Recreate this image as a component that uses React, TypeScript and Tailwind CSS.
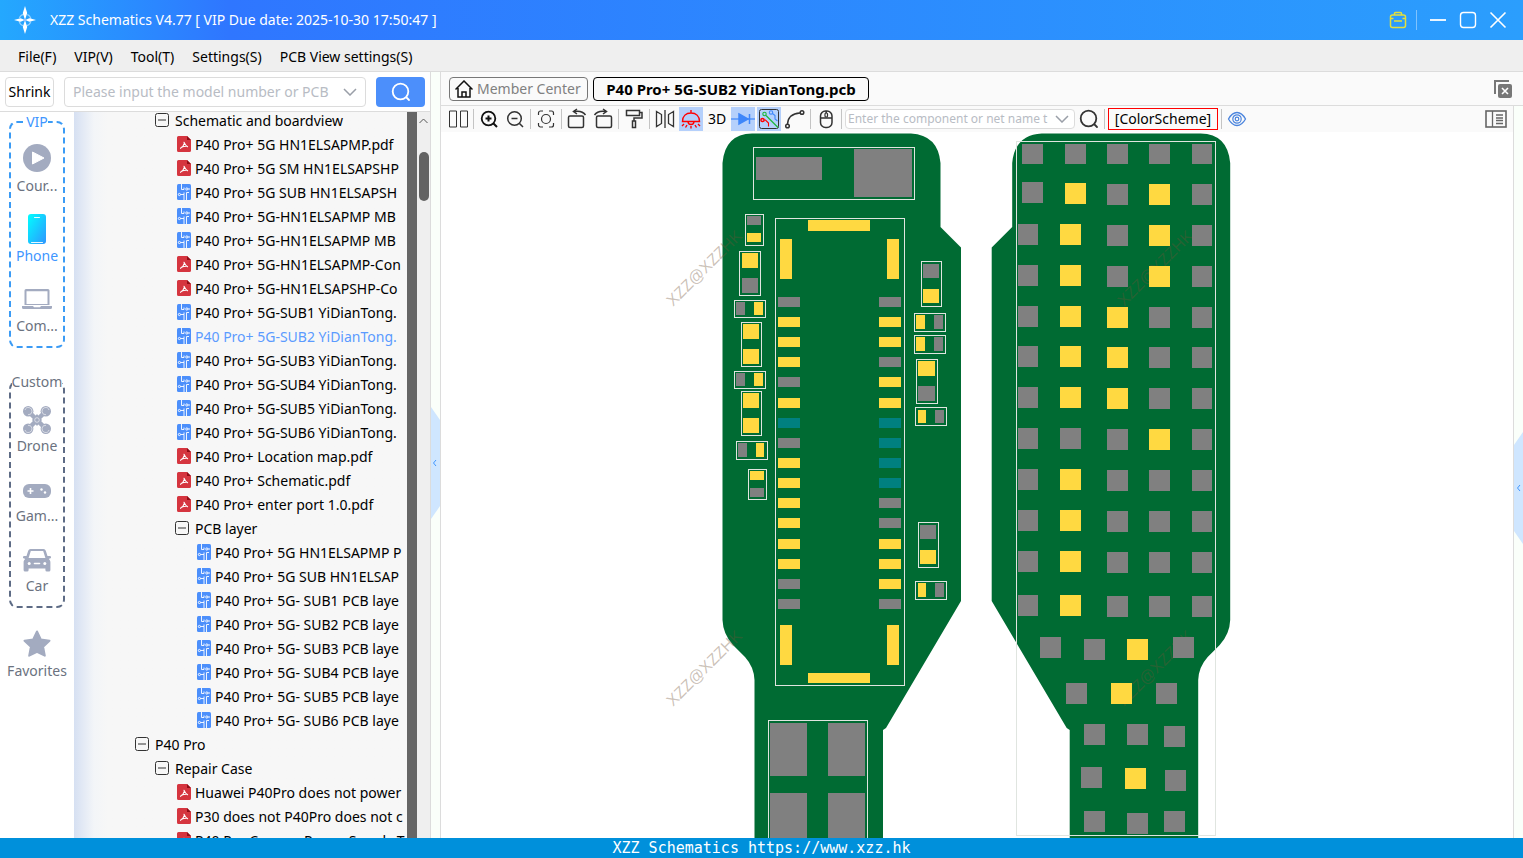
import { FC, ReactNode } from 'react';

type Kind = 'folder' | 'pdf' | 'pcb';

interface TreeRow {
  level: 0 | 1 | 2 | 3;
  kind: Kind;
  name: string;
  active?: boolean;
}

const rows: TreeRow[] = [
  { level: 1, kind: 'folder', name: 'Schematic and boardview' },
  { level: 2, kind: 'pdf', name: 'P40 Pro+ 5G HN1ELSAPMP.pdf' },
  { level: 2, kind: 'pdf', name: 'P40 Pro+ 5G SM HN1ELSAPSHP' },
  { level: 2, kind: 'pcb', name: 'P40 Pro+ 5G SUB HN1ELSAPSH' },
  { level: 2, kind: 'pcb', name: 'P40 Pro+ 5G-HN1ELSAPMP MB' },
  { level: 2, kind: 'pcb', name: 'P40 Pro+ 5G-HN1ELSAPMP MB' },
  { level: 2, kind: 'pdf', name: 'P40 Pro+ 5G-HN1ELSAPMP-Con' },
  { level: 2, kind: 'pdf', name: 'P40 Pro+ 5G-HN1ELSAPSHP-Co' },
  { level: 2, kind: 'pcb', name: 'P40 Pro+ 5G-SUB1 YiDianTong.' },
  { level: 2, kind: 'pcb', name: 'P40 Pro+ 5G-SUB2 YiDianTong.', active: true },
  { level: 2, kind: 'pcb', name: 'P40 Pro+ 5G-SUB3 YiDianTong.' },
  { level: 2, kind: 'pcb', name: 'P40 Pro+ 5G-SUB4 YiDianTong.' },
  { level: 2, kind: 'pcb', name: 'P40 Pro+ 5G-SUB5 YiDianTong.' },
  { level: 2, kind: 'pcb', name: 'P40 Pro+ 5G-SUB6 YiDianTong.' },
  { level: 2, kind: 'pdf', name: 'P40 Pro+ Location map.pdf' },
  { level: 2, kind: 'pdf', name: 'P40 Pro+ Schematic.pdf' },
  { level: 2, kind: 'pdf', name: 'P40 Pro+ enter port 1.0.pdf' },
  { level: 2, kind: 'folder', name: 'PCB layer' },
  { level: 3, kind: 'pcb', name: 'P40 Pro+ 5G HN1ELSAPMP P' },
  { level: 3, kind: 'pcb', name: 'P40 Pro+ 5G SUB HN1ELSAP' },
  { level: 3, kind: 'pcb', name: 'P40 Pro+ 5G- SUB1 PCB laye' },
  { level: 3, kind: 'pcb', name: 'P40 Pro+ 5G- SUB2 PCB laye' },
  { level: 3, kind: 'pcb', name: 'P40 Pro+ 5G- SUB3 PCB laye' },
  { level: 3, kind: 'pcb', name: 'P40 Pro+ 5G- SUB4 PCB laye' },
  { level: 3, kind: 'pcb', name: 'P40 Pro+ 5G- SUB5 PCB laye' },
  { level: 3, kind: 'pcb', name: 'P40 Pro+ 5G- SUB6 PCB laye' },
  { level: 0, kind: 'folder', name: 'P40 Pro' },
  { level: 1, kind: 'folder', name: 'Repair Case' },
  { level: 2, kind: 'pdf', name: 'Huawei P40Pro does not power' },
  { level: 2, kind: 'pdf', name: 'P30 does not P40Pro does not c' },
  { level: 2, kind: 'pdf', name: 'P40 Pro Camera Power Supply T' },
];

const indents = ['pl-[61px]', 'pl-[81px]', 'pl-[101px]', 'pl-[121px]'];

/* ---------- icons ---------- */

const MinusBox = () => (
  <svg width="14" height="14" viewBox="0 0 14 14" fill="none" stroke="#333">
    <rect x=".5" y=".5" width="13" height="13" rx="2" />
    <path d="M3 7h8" />
  </svg>
);

const PdfIcon = () => (
  <svg width="14" height="16" viewBox="0 0 14 16">
    <path d="M1.500 0H10l4 4v10.500a1.500 1.500 0 0 1-1.500 1.500h-11A1.500 1.500 0 0 1 0 14.500v-13A1.500 1.500 0 0 1 1.500 0z" fill="#d5353f" />
    <path d="M10 0l4 4h-4z" fill="#8f0d16" />
    <path d="M7 6.200c.9 2.200 1.600 3.400 3.600 4.500M7.300 7.300c-.5 2-1.600 3.600-3.800 5M4.500 11.300c1.600-.9 3.500-1.200 5.500-1.100" fill="none" stroke="#fff" strokeWidth="1.100" strokeLinecap="round" />
  </svg>
);

const PcbIcon = () => (
  <svg width="14" height="16" viewBox="0 0 14 16">
    <rect width="14" height="16" rx="1.500" fill="#4c8ffb" />
    <g fill="none" stroke="#fff" strokeWidth=".9">
      <path d="M4.500 0v5.500h2.500v-2M3.500 10.500H7V16M7 10.500V8.500M9.500 16V8.500H12M11 5h2" />
      <circle cx="9.800" cy="5" r="1.100" />
      <circle cx="2.400" cy="10.500" r="1.100" />
    </g>
  </svg>
);

const LogoIcon = () => (
  <svg width="24" height="30" viewBox="0 0 24 30" fill="#fff">
    <circle cx="12" cy="15" r="6" fill="none" stroke="#fff" strokeOpacity=".5" strokeWidth="1.200" strokeDasharray="6 3.400" strokeDashoffset="-1.700" />
    <path d="M12 1l2.200 7-2.200 7-2.200-7zM12 29l2.200-7-2.200-7-2.200 7zM1 15l6.500-1.700L12 15l-4.500 1.700zM23 15l-6.500-1.700L12 15l4.500 1.700z" />
    <circle cx="12" cy="15" r="1.600" fill="#8fc0ff" />
  </svg>
);

const CourseIcon = () => (
  <svg width="28" height="28" viewBox="0 0 28 28">
    <circle cx="14" cy="14" r="14" fill="#a3abc0" />
    <path d="M9.500 8l11.500 6-11.500 6z" fill="#fff" stroke="#fff" strokeLinejoin="round" />
  </svg>
);

const PhoneIcon = () => (
  <svg width="18" height="32" viewBox="0 -2 18 32">
    <defs>
      <linearGradient id="phone" x1="0" y1="0" x2="1" y2="1">
        <stop offset="0" stopColor="#0ff" />
        <stop offset="1" stopColor="#2f95ff" />
      </linearGradient>
    </defs>
    <rect width="18" height="30" rx="3" fill="url(#phone)" />
    <path d="M6.500 3.500h5M3.500 28.500h11" stroke="#fff" strokeLinecap="round" strokeOpacity=".9" />
  </svg>
);

const ComputerIcon = () => (
  <svg width="30" height="22" viewBox="0 -2 30 22" fill="#a3abc0">
    <path d="M4 0h22a1.500 1.500 0 0 1 1.500 1.500V16h-25V1.500A1.500 1.500 0 0 1 4 0zm.5 2.200V15h21V2.200z" fillRule="evenodd" />
    <path d="M0 17h11l1 1.200h6l1-1.200h11v1.500a1.500 1.500 0 0 1-1.500 1.500h-27A1.500 1.500 0 0 1 0 18.500z" />
  </svg>
);

const DroneIcon = () => (
  <svg width="28" height="32" viewBox="0 -4 28 32" fill="#a3abc0">
    <path d="M5 5l9 9M23 5l-9 9M5 23l9-9M23 23l-9-9" stroke="#a3abc0" strokeWidth="4.500" strokeLinecap="round" />
    <circle cx="5.200" cy="5.200" r="5.200" />
    <circle cx="22.800" cy="5.200" r="5.200" />
    <circle cx="5.200" cy="22.800" r="5.200" />
    <circle cx="22.800" cy="22.800" r="5.200" />
    <path d="M14 8l5 6-5 6-5-6z" />
    <g fill="none" stroke="#fff" strokeWidth=".7" strokeOpacity=".8">
      <path d="M2 4a3.600 3.600 0 1 1 3 4.700M26 4a3.600 3.600 0 1 0-3 4.700M2 24a3.600 3.600 0 1 0 3-4.700M26 24a3.600 3.600 0 1 1-3-4.700" />
      <circle cx="14" cy="14" r="2.300" />
    </g>
  </svg>
);

const GameIcon = () => (
  <svg width="28" height="20" viewBox="0 -6 28 20">
    <rect width="28" height="14" rx="6" fill="#a3abc0" />
    <path d="M4.500 7h6M7.500 4v6" stroke="#fff" strokeWidth="1.600" />
    <circle cx="18.500" cy="5.500" r="1.200" fill="#fff" />
    <circle cx="22" cy="8.500" r="1.200" fill="#fff" />
  </svg>
);

const CarIcon = () => (
  <svg width="28" height="28" viewBox="0 -4 28 28" fill="#a3abc0">
    <path d="M7.500 1h13a2.500 2.500 0 0 1 2.300 1.700L24.500 8h2.300a1 1 0 0 1 0 2.500l-1 .5c1 .8 1.600 2 1.600 3.300V22a1.500 1.500 0 0 1-1.500 1.500h-2A1.500 1.500 0 0 1 22.400 22v-1.500H5.600V22a1.500 1.500 0 0 1-1.500 1.500h-2A1.500 1.500 0 0 1 .6 22v-7.700c0-1.300.6-2.500 1.600-3.300l-1-.5a1 1 0 0 1 0-2.500h2.300l1.700-5.300A2.500 2.500 0 0 1 7.500 1zm.3 2L5.600 10h16.800L20.200 3z" fillRule="evenodd" />
    <circle cx="6.200" cy="15.500" r="1.500" fill="#fff" />
    <circle cx="21.800" cy="15.500" r="1.500" fill="#fff" />
    <path d="M11.500 15.500h5" stroke="#fff" strokeWidth="1.600" strokeLinecap="round" />
  </svg>
);

const StarIcon = () => (
  <svg width="28" height="30" viewBox="0 -2 28 30" fill="#a3abc0" stroke="#a3abc0" strokeWidth="2" strokeLinejoin="round">
    <path d="M14 1.500l3.800 8 8.700 1.200-6.400 6 1.700 9L14 21.800l-7.800 3.900 1.700-9-6.400-6 8.700-1.200z" />
  </svg>
);

const Chevron = () => (
  <svg width="14" height="8" viewBox="0 0 14 8" fill="none" stroke="#9a9fa8" strokeWidth="1.500">
    <path d="M1 1l6 6 6-6" />
  </svg>
);

const SearchIcon: FC<{ stroke: string }> = ({ stroke }) => (
  <svg width="20" height="20" viewBox="0 0 20 20" fill="none" stroke={stroke} strokeWidth="1.800" strokeLinecap="round">
    <circle cx="9.500" cy="9.500" r="7.800" />
    <path d="M15.500 15.500l2.500 2.500" />
  </svg>
);

/* ---------- left side ---------- */

interface NavItemProps {
  label: string;
  icon: ReactNode;
  active?: boolean;
}

const NavItem: FC<NavItemProps> = ({ label, icon, active }) => (
  <button className="flex h-[70px] w-full flex-col items-center pt-1 text-sm leading-5">
    <span className="flex h-9 items-center justify-center">{icon}</span>
    <span className={active ? 'text-[#4096ff]' : 'text-[#6b7280]'}>{label}</span>
  </button>
);

const Sidebar = () => (
  <nav className="flex w-[74px] shrink-0 flex-col items-center bg-white">
    <fieldset className="w-14 rounded-lg border-2 border-dashed border-[#3b9bf5] pt-1">
      <legend className="mx-auto text-sm leading-5 text-[#4096ff]">VIP</legend>
      <NavItem label="Cour..." icon={<CourseIcon />} />
      <NavItem label="Phone" icon={<PhoneIcon />} active />
      <NavItem label="Com..." icon={<ComputerIcon />} />
    </fieldset>
    <fieldset className="mt-6 w-14 rounded-lg border-2 border-dashed border-[#5d6b85] pt-1">
      <legend className="mx-auto text-sm leading-5 text-[#6b7280]">Custom</legend>
      <NavItem label="Drone" icon={<DroneIcon />} />
      <NavItem label="Gam..." icon={<GameIcon />} />
      <NavItem label="Car" icon={<CarIcon />} />
    </fieldset>
    <div className="mt-[13px] w-full">
      <NavItem label="Favorites" icon={<StarIcon />} />
    </div>
  </nav>
);

const Tree = () => (
  <div className="min-w-0 flex-1 overflow-hidden bg-gradient-to-r from-[#d6e0f2] via-[#f3f5f8] via-[20px] to-[#f7f7f7] to-[34px] pr-px">
    <ul className="-mt-1 overflow-hidden">
      {rows.map((row, i) => (
        <li key={i} className={`flex h-6 items-center ${indents[row.level]}`}>
          <span className={`w-5 shrink-0 ${row.kind === 'folder' ? '' : 'pl-[2px]'}`}>
            {row.kind === 'folder' && <MinusBox />}
            {row.kind === 'pdf' && <PdfIcon />}
            {row.kind === 'pcb' && <PcbIcon />}
          </span>
          <span className={`pt-[2px] text-sm whitespace-nowrap ${row.active ? 'text-[#5b9bff]' : 'text-black'}`}>
            {row.name}
          </span>
        </li>
      ))}
    </ul>
  </div>
);

const LeftPanel = () => (
  <aside className="flex w-[431px] shrink-0 flex-col border-r border-[#dcdcdc] bg-white">
    <form className="flex h-10 shrink-0 items-center border-b border-[#dcdcdc] px-[5px]">
      <button type="button" className="h-[30px] w-[49px] rounded border border-[#dcdcdc] text-sm text-black">
        Shrink
      </button>
      <label className="ml-[10px] flex h-[30px] min-w-0 flex-1 items-center gap-1 rounded border border-[#dcdcdc] px-2">
        <input
          className="min-w-0 flex-1 text-sm outline-none placeholder:text-[#b8bcc4]"
          placeholder="Please input the model number or PCB"
          aria-label="Model number"
        />
        <Chevron />
      </label>
      <button type="button" aria-label="Search" className="ml-[10px] flex h-[30px] w-[49px] items-center justify-center rounded bg-[#4c8ffb]">
        <SearchIcon stroke="#fff" />
      </button>
    </form>
    <div className="flex min-h-0 flex-1">
      <Sidebar />
      <Tree />
      <div className="w-[10px] shrink-0 bg-[#666]" />
      <div className="flex w-[13px] shrink-0 flex-col items-center bg-[#efefef]">
        <svg className="mt-1.5" width="9" height="6" viewBox="0 0 9 6" fill="none" stroke="#555">
          <path d="M.5 5l4-4 4 4" />
        </svg>
        <div className="mt-7 h-[49px] w-[10px] rounded-full bg-[#636363]" />
      </div>
    </div>
  </aside>
);

const Handle = () => (
  <svg width="9" height="112" viewBox="0 0 9 112" className="block">
    <path d="M0 0l9 13v86l-9 13z" fill="#cfe6ff" />
    <path d="M5 53L2.500 56 5 59" fill="none" stroke="#4096ff" />
  </svg>
);

const HandleRight = () => (
  <svg width="9" height="112" viewBox="0 0 9 112" className="block">
    <path d="M9 0L0 13v86l9 13z" fill="#cfe6ff" />
    <path d="M6 53l-2.500 3L6 59" fill="none" stroke="#4096ff" />
  </svg>
);

/* ---------- toolbar ---------- */

const Sep = () => <span className="mx-px h-5 w-px shrink-0 bg-[#c4c4c4]" />;

interface ToolProps {
  label: string;
  on?: boolean;
  children: ReactNode;
}

const Tool: FC<ToolProps> = ({ label, on, children }) => (
  <button
    aria-label={label}
    className={`flex h-6 w-6 shrink-0 items-center justify-center ${on ? 'bg-[#b5d0fb]' : ''}`}
  >
    {children}
  </button>
);

const Icon: FC<{ children: ReactNode; stroke?: string }> = ({ children, stroke = '#333' }) => (
  <svg width="24" height="24" viewBox="0 0 24 24" fill="none" stroke={stroke} strokeWidth="1.500" className="shrink-0">
    {children}
  </svg>
);

const Toolbar = () => (
  <div className="flex h-[26px] shrink-0 items-center gap-[2px] bg-[#fafafa] pl-[5px] text-[#222]">
    <Tool label="Split view">
      <Icon>
        <path d="M3.500 4h7v16h-7zM14.500 4h7v16h-7z" strokeWidth="1" />
      </Icon>
    </Tool>
    <Sep />
    <Tool label="Zoom in">
      <Icon stroke="#111">
        <circle cx="11.500" cy="11.500" r="6.800" strokeWidth="1.800" />
        <path d="M11.500 8.500v6M8.500 11.500h6M16.500 16.500l3.500 3.500" strokeWidth="2" />
      </Icon>
    </Tool>
    <Tool label="Zoom out">
      <Icon>
        <circle cx="11.500" cy="11.500" r="6.800" />
        <path d="M8.500 11.500h6M16.500 16.500l3.500 3.500" />
      </Icon>
    </Tool>
    <Sep />
    <Tool label="Fit">
      <Icon>
        <path d="M4.500 8V6a2 2 0 0 1 2-2H9M15 4h2.500a2 2 0 0 1 2 2v2M19.500 16v2a2 2 0 0 1-2 2H15M9 20H6.500a2 2 0 0 1-2-2v-2" strokeWidth="1.200" />
        <circle cx="12" cy="12" r="4.500" strokeWidth="1.200" />
      </Icon>
    </Tool>
    <Sep />
    <Tool label="Rotate left">
      <Icon>
        <rect x="3.500" y="9" width="15" height="11.500" rx="1.500" />
        <path d="M20.500 8c-2-3-6-4.500-11.500-3.500M12 2L8.500 4.500 12 7" />
      </Icon>
    </Tool>
    <Tool label="Rotate right">
      <Icon>
        <rect x="5.500" y="9" width="15" height="11.500" rx="1.500" />
        <path d="M3.500 8c2-3 6-4.500 11.500-3.500M12 2l3.500 2.500L12 7" />
      </Icon>
    </Tool>
    <Sep />
    <Tool label="Paint">
      <Icon>
        <path d="M4.500 3.500h13v5h-13zM17.500 5.500h2.500v5.500h-8v3M10.500 14h3v6.500h-3z" />
      </Icon>
    </Tool>
    <Sep />
    <Tool label="Mirror">
      <Icon>
        <path d="M3.500 4.500l5 3v9l-5 3zM20.500 4.500l-5 3v9l5 3zM12 3v18" strokeWidth="1.300" />
      </Icon>
    </Tool>
    <Tool label="Lamp" on>
      <Icon stroke="#f00">
        <path d="M12 3v3M3.500 14.500C3.500 9 7 6 12 6s8.500 3 8.500 8.500zM9 14.500c0 4 6 4 6 0M5 17l-2 2M8 18l-1.500 2.500M12 19v2.500M16 18l1.500 2.500M19 17l2 2" strokeWidth="1.400" />
      </Icon>
    </Tool>
    <button className="h-6 w-6 shrink-0 text-sm text-black">3D</button>
    <Tool label="Diode" on>
      <Icon stroke="#3f87fa">
        <path d="M0 12h24" strokeWidth="1.200" />
        <path d="M8 7l9 5-9 5z" fill="#3f87fa" />
        <path d="M18.500 7v10" />
      </Icon>
    </Tool>
    <Tool label="Route" on>
      <Icon>
        <rect x="2.500" y="2.500" width="19" height="19" rx="2" strokeWidth="1" />
        <circle cx="5.500" cy="13" r="1.600" stroke="#f00" />
        <path d="M7 13h1.500l3 3v3.500" stroke="#f00" strokeWidth="1.100" />
        <path d="M9 8.500l12 12" stroke="#1db83a" strokeWidth="1.300" />
        <circle cx="7.500" cy="7" r="1.700" stroke="#1db83a" strokeWidth="1.100" />
        <circle cx="14" cy="5.500" r="1.700" stroke="#3f87fa" strokeWidth="1.100" />
        <path d="M15.500 6.500l2.500 2v3.500l2.500 2" stroke="#3f87fa" strokeWidth="1.100" />
      </Icon>
    </Tool>
    <Tool label="Curve">
      <Icon>
        <circle cx="4.500" cy="19" r="1.800" />
        <circle cx="19" cy="5.500" r="1.800" />
        <path d="M4.500 17C5 10 9 6.500 17 6" />
      </Icon>
    </Tool>
    <Sep />
    <Tool label="Mouse">
      <Icon>
        <rect x="6.500" y="4" width="11.500" height="16.500" rx="5" />
        <path d="M6.500 11h11.500M12.200 4v2" />
        <rect x="11" y="6" width="2.500" height="4" rx="1" strokeWidth="1.200" />
      </Icon>
    </Tool>
    <Sep />
    <label className="flex h-5 w-[230px] items-center rounded border border-[#dcdcdc] bg-white px-[2px]">
      <input
        className="min-w-0 flex-1 text-xs outline-none placeholder:text-[#b8bcc4]"
        placeholder="Enter the component or net name t"
        aria-label="Component or net name"
      />
      <span className="pr-[3px] pl-1">
        <Chevron />
      </span>
    </label>
    <Tool label="Find">
      <SearchIcon stroke="#333" />
    </Tool>
    <Sep />
    <button className="h-[22px] w-[110px] border border-[#f00] text-sm leading-5 text-black">[ColorScheme]</button>
    <Sep />
    <Tool label="Show">
      <Icon stroke="#4a84dd">
        <path d="M3.500 12C6 7.500 9 5.500 12 5.500s6 2 8.500 6.500C18 16.500 15 18.500 12 18.500S6 16.500 3.500 12z" strokeWidth="1.300" />
        <circle cx="12" cy="12" r="4.200" strokeWidth="1.200" />
        <circle cx="12" cy="12" r="1.800" strokeWidth="1.200" />
      </Icon>
    </Tool>
    <button aria-label="Side list" className="mr-[6px] ml-auto">
      <svg width="22" height="18" viewBox="0 0 22 18" fill="none" stroke="#666">
        <rect x="1" y="1" width="20" height="16" strokeWidth="1.600" />
        <path d="M7.500 1v16M11 5h7M11 8h7M11 10.500h7M11 13.500h7" strokeWidth="1.300" />
      </svg>
    </button>
  </div>
);

const Tabs = () => (
  <div className="flex h-[34px] shrink-0 items-center gap-[5px] border-b border-[#dcdcdc] bg-[#fafafa] pr-[11px] pl-2">
    <button className="flex h-6 w-[139px] items-center gap-1 rounded border border-[#777] px-[5px] text-sm text-[#808080]">
      <svg width="18" height="18" viewBox="0 0 18 18" fill="none" stroke="#111" strokeWidth="1.500" className="shrink-0">
        <path d="M.5 9.500L9 1l8.500 8.500M3 8v9h12V8" />
        <path d="M7 17v-5h4v5" />
      </svg>
      <span className="whitespace-nowrap">Member Center</span>
    </button>
    <button className="h-6 w-[276px] rounded border border-black text-[15px] leading-5 font-bold text-black">
      P40 Pro+ 5G-SUB2 YiDianTong.pcb
    </button>
    <button aria-label="Close all" className="ml-auto">
      <svg width="18" height="18" viewBox="0 0 18 18">
        <path d="M1 14V1h14" fill="none" stroke="#777" strokeWidth="2" />
        <rect x="4" y="4" width="14" height="14" rx="2" fill="#777" />
        <path d="M8 8l6 6M14 8l-6 6" stroke="#fff" strokeWidth="1.600" />
      </svg>
    </button>
  </div>
);

/* ---------- board ---------- */

const fills: Record<string, string> = { Y: '#ffd941', G: '#808080', T: '#008080' };

// colour, x, y, width, height
type Pad = [string, number, number, number, number];

// x, y, width, height
const outlines = [
  [753, 147, 161, 52],
  [775, 218, 129, 467],
  [745, 214, 18, 31],
  [739, 251, 21, 44],
  [734, 300, 31, 17],
  [741, 322, 20, 44],
  [734, 371, 31, 17],
  [741, 391, 20, 44],
  [736, 441, 31, 18],
  [748, 469, 18, 30],
  [921, 261, 20, 45],
  [914, 313, 31, 18],
  [914, 335, 31, 18],
  [916, 359, 21, 44],
  [915, 407, 31, 18],
  [918, 522, 20, 45],
  [915, 581, 31, 18],
  [768, 720, 99, 140],
  [1016, 141, 199, 694],
];

const frontPads: Pad[] = [
  ['G', 756, 157, 66, 23],
  ['G', 854, 149, 58, 48],
  ['Y', 808, 220, 62, 11],
  ['Y', 808, 673, 62, 10],
  ['Y', 780, 239, 12, 40],
  ['Y', 887, 239, 12, 40],
  ['Y', 780, 625, 12, 40],
  ['Y', 887, 625, 12, 40],
  ['G', 747, 216, 14, 9],
  ['Y', 747, 233, 14, 9],
  ['Y', 742, 253, 16, 15],
  ['G', 742, 278, 16, 15],
  ['G', 736, 302, 9, 13],
  ['Y', 754, 302, 9, 13],
  ['Y', 743, 324, 16, 15],
  ['Y', 743, 349, 16, 15],
  ['G', 736, 373, 9, 13],
  ['Y', 754, 373, 9, 13],
  ['Y', 743, 393, 16, 15],
  ['Y', 743, 418, 16, 15],
  ['G', 738, 443, 9, 14],
  ['Y', 756, 443, 8, 14],
  ['Y', 750, 471, 14, 9],
  ['G', 750, 488, 14, 9],
  ['G', 923, 264, 16, 14],
  ['Y', 923, 289, 16, 14],
  ['Y', 916, 315, 9, 14],
  ['G', 934, 315, 9, 14],
  ['Y', 916, 337, 9, 14],
  ['G', 934, 337, 9, 14],
  ['Y', 918, 361, 17, 15],
  ['G', 918, 386, 17, 15],
  ['Y', 918, 410, 8, 13],
  ['G', 935, 410, 9, 13],
  ['G', 920, 525, 16, 14],
  ['Y', 920, 550, 16, 14],
  ['Y', 918, 583, 8, 14],
  ['G', 935, 583, 9, 14],
  ['G', 770, 723, 37, 53],
  ['G', 828, 723, 37, 53],
  ['G', 770, 793, 37, 53],
  ['G', 828, 793, 37, 53],
];

const pinRows = [297, 317, 337, 357, 377, 398, 418, 438, 458, 478, 498, 518, 539, 559, 579, 599];
const leftPins = 'GYYYGYTGYYYYYYGG';
const rightPins = 'GYYGYYTTTTGGYYYG';

const gridCols = [1018, 1060, 1107, 1149, 1192];
const gridRows: [number, string][] = [
  [224, 'GYGYG'],
  [265, 'GYGYG'],
  [306, 'GYYGG'],
  [346, 'GYYGG'],
  [387, 'GYYGG'],
  [428, 'GGGYG'],
  [469, 'GYGGG'],
  [510, 'GYGGG'],
  [551, 'GYGGG'],
  [595, 'GYGGG'],
];

// test points outside the regular grid
const loosePads: [string, number, number][] = [
  ['G', 1022, 144],
  ['G', 1065, 144],
  ['G', 1107, 144],
  ['G', 1149, 144],
  ['G', 1192, 144],
  ['G', 1022, 182],
  ['Y', 1065, 183],
  ['G', 1107, 184],
  ['Y', 1149, 184],
  ['G', 1192, 184],
  ['G', 1040, 637],
  ['G', 1084, 639],
  ['Y', 1127, 639],
  ['G', 1173, 637],
  ['G', 1066, 683],
  ['Y', 1111, 683],
  ['G', 1156, 683],
  ['G', 1084, 724],
  ['G', 1127, 724],
  ['G', 1164, 726],
  ['G', 1081, 767],
  ['Y', 1125, 768],
  ['G', 1165, 770],
  ['G', 1084, 811],
  ['G', 1127, 813],
  ['G', 1164, 811],
];

const marks = [
  [673, 307],
  [673, 707],
  [1124, 307],
  [1124, 707],
];

const boardShape =
  'M722.500 163Q725 134 752 133.500H911Q938 135 940.500 163V227L961 247.500V601L886 728L883 730V900H754.500V680Q754 667 745 657L733 645Q723 634 722.500 620z';

const Board = () => (
  <svg className="h-full w-full" viewBox="441 132 1072 706" preserveAspectRatio="xMidYMin slice">
    <path d={boardShape} fill="#006b33" />
    <path d={boardShape} fill="#006b33" transform="translate(1952.700 0) scale(-1 1)" />
    {marks.map(([x, y]) => (
      <text
        key={`${x}-${y}`}
        transform={`translate(${x} ${y}) rotate(-45)`}
        className="font-['Liberation_Sans',sans-serif] text-base"
        fill="#6e5236"
        fillOpacity=".36"
      >
        XZZ@XZZHK
      </text>
    ))}
    {frontPads.map(([c, x, y, w, h]) => (
      <rect key={`${x}-${y}`} x={x} y={y} width={w} height={h} fill={fills[c]} />
    ))}
    {pinRows.map((y, i) => (
      <g key={y}>
        <rect x="778" y={y} width="22" height="10" fill={fills[leftPins[i]]} />
        <rect x="879" y={y} width="22" height="10" fill={fills[rightPins[i]]} />
      </g>
    ))}
    {gridRows.map(([y, colors]) =>
      gridCols.map((x, i) => (
        <rect key={`${x}-${y}`} x={x} y={i < 2 ? y : y + 1} width={i === 0 || i === 4 ? 20 : 21} height="21" fill={fills[colors[i]]} />
      ))
    )}
    {loosePads.map(([c, x, y]) => (
      <rect key={`${x}-${y}`} x={x} y={y} width={x === 1192 ? 20 : 21} height={y === 144 ? 20 : 21} fill={fills[c]} />
    ))}
    {outlines.map(([x, y, w, h]) => (
      <rect key={`${x}-${y}`} x={x + 0.5} y={y + 0.5} width={w} height={h} fill="none" stroke="#e0e5e0" />
    ))}
  </svg>
);

/* ---------- window ---------- */

const TitleBar = () => (
  <header className="flex h-10 shrink-0 items-center bg-gradient-to-r from-[#24a8fe] via-[#2f76ff] via-15% to-[#2b9efd] pr-4 pl-[13px] text-white">
    <LogoIcon />
    <h1 className="ml-[13px] text-sm">XZZ Schematics V4.77 [ VIP Due date: 2025-10-30 17:50:47 ]</h1>
    <div className="ml-auto flex items-center">
      <button aria-label="Toolbox">
        <svg width="18" height="18" viewBox="0 0 18 18" fill="none" stroke="#e3e03c" strokeWidth="1.500">
          <rect x="1.500" y="4" width="15" height="12.500" rx="2" />
          <path d="M5.500 4V2.500a1 1 0 0 1 1-1h5a1 1 0 0 1 1 1V4M1.500 7.500h3M13.500 7.500h3M5 10h8" />
        </svg>
      </button>
      <span className="mr-3 ml-[9px] h-5 w-px bg-white/40" />
      <button aria-label="Minimize">
        <svg width="18" height="18" viewBox="0 0 18 18" stroke="#fff" strokeWidth="1.800">
          <path d="M1 9h16" />
        </svg>
      </button>
      <button aria-label="Maximize" className="ml-3">
        <svg width="18" height="18" viewBox="0 0 18 18" fill="none" stroke="#fff" strokeWidth="1.400">
          <rect x="1.500" y="1.500" width="15" height="15" rx="3" />
        </svg>
      </button>
      <button aria-label="Close" className="ml-3">
        <svg width="18" height="18" viewBox="0 0 18 18" stroke="#fff" strokeWidth="1.600">
          <path d="M1.500 1.500l15 15M16.500 1.500l-15 15" />
        </svg>
      </button>
    </div>
  </header>
);

const MenuBar = () => (
  <nav className="flex h-8 shrink-0 items-center gap-[18px] border-b border-[#dcdcdc] bg-[#efefef] pt-[2px] pl-[18px] text-sm text-black">
    <button>File(F)</button>
    <button>VIP(V)</button>
    <button>Tool(T)</button>
    <button>Settings(S)</button>
    <button>PCB View settings(S)</button>
  </nav>
);

const App = () => (
  <div className="flex h-screen flex-col overflow-hidden bg-white font-['Noto_Sans','Open_Sans',sans-serif]">
    <TitleBar />
    <MenuBar />
    <div className="flex min-h-0 flex-1">
      <LeftPanel />
      <div className="w-[9px] shrink-0 bg-[#fafffa] pt-[335px]">
        <Handle />
      </div>
      <main className="flex min-w-0 flex-1 flex-col border-l border-[#dcdcdc]">
        <Tabs />
        <div className="flex min-h-0 flex-1">
          <div className="flex min-w-0 flex-1 flex-col">
            <Toolbar />
            <div className="min-h-0 flex-1 overflow-hidden bg-white">
              <Board />
            </div>
          </div>
          <div className="w-[10px] shrink-0 border-l border-[#dcdcdc] bg-[#fafffa] pt-[326px]">
            <HandleRight />
          </div>
        </div>
      </main>
    </div>
    <footer className="h-5 shrink-0 bg-[#0090db] text-center font-['DejaVu_Sans_Mono',monospace] text-[15px] leading-5 text-white">
      XZZ Schematics https://www.xzz.hk
    </footer>
  </div>
);

export default App;
